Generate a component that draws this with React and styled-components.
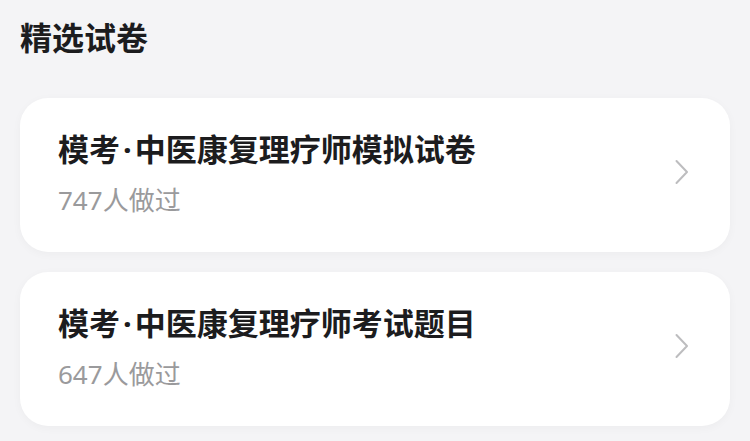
import React from 'react';
import styled, { createGlobalStyle } from 'styled-components';

const GlobalStyle = createGlobalStyle`
  html, body {
    margin: 0;
    padding: 0;
    background: #f4f4f6;
  }
  body {
    font-family: "Noto Sans", "Noto Sans CJK SC", sans-serif;
  }
`;

const papers = [
  { id: 1, prefix: '模考', title: '中医康复理疗师模拟试卷', count: 747 },
  { id: 2, prefix: '模考', title: '中医康复理疗师考试题目', count: 647 },
];

const Page = styled.div`
  width: 750px;
  height: 441px;
  box-sizing: border-box;
  padding: 17px 20px 0 20px;
  background: #f4f4f6;
  overflow: hidden;
`;

const Heading = styled.h2`
  margin: 0 0 40px 0;
  font-size: 32px;
  line-height: 41px;
  font-weight: 700;
  color: #1c1c1e;
`;

const List = styled.div`
  display: flex;
  flex-direction: column;
  gap: 20px;
  width: 710px;
`;

const Card = styled.div`
  display: flex;
  align-items: center;
  justify-content: space-between;
  height: 154px;
  box-sizing: border-box;
  padding: 0 38px;
  background: #ffffff;
  border-radius: 28px;
  box-shadow: 0 2px 10px rgba(0, 0, 0, 0.035);
`;

const Info = styled.div`
  display: flex;
  flex-direction: column;
  gap: 14px;
  margin-top: -4px;
`;

const Title = styled.div`
  font-size: 31px;
  line-height: 40px;
  font-weight: 700;
  color: #1c1c1e;
  white-space: nowrap;
`;

const Dot = styled.span`
  margin: 0 3px;
`;

const Meta = styled.div`
  font-size: 26px;
  line-height: 34px;
  color: #9a9a9c;
`;

const Chevron = styled.svg`
  width: 16px;
  height: 26px;
  margin-right: 2px;
  margin-top: -6px;
  flex-shrink: 0;
`;

const App = () => {
  return (
    <Page>
      <GlobalStyle />
      <Heading>精选试卷</Heading>
      <List>
        {papers.map((p) => (
          <Card key={p.id}>
            <Info>
              <Title>
                {p.prefix}
                <Dot>·</Dot>
                {p.title}
              </Title>
              <Meta>{p.count}人做过</Meta>
            </Info>
            <Chevron viewBox="0 0 16 26" fill="none">
              <path d="M2.5 2 L13 13 L2.5 24" stroke="#bdbdbf" strokeWidth="2" strokeLinecap="round" strokeLinejoin="round" />
            </Chevron>
          </Card>
        ))}
      </List>
    </Page>
  );
};

export default App;
